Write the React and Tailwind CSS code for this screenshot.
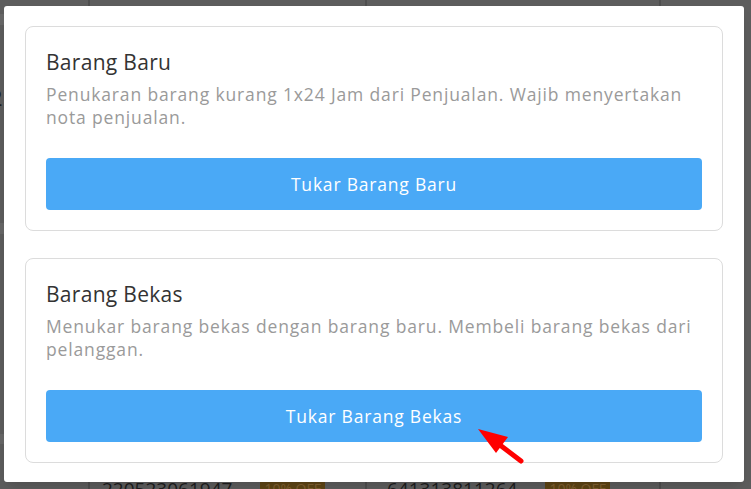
import React from "react";

const font = { fontFamily: '"Open Sans", "Noto Sans", sans-serif' };

function OptionCard({ title, desc, action }) {
  return (
    <div className="rounded-lg border-[1.5px] border-[#dcdcdc] px-5 pt-5 pb-5">
      <h3 className="text-[21px] leading-[30px] tracking-[0.3px] text-[#333]">{title}</h3>
      <p className="mt-[6px] text-[17.5px] leading-[23px] tracking-[0.85px] text-[#9a9a9a]">{desc}</p>
      <button className="mt-[29px] flex h-[52px] w-full items-center justify-center rounded-[4px] bg-[#4aa9f6] text-[17.5px] tracking-[0.8px] text-white">
        {action}
      </button>
    </div>
  );
}

export default function App() {
  return (
    <div className="relative h-[489px] w-[751px] overflow-hidden bg-[#5d5d5d]" style={font}>
      {/* dimmed page behind */}
      <div className="flex h-full">
        <div className="flex w-[90px] flex-col border-r-2 border-[#4e4e4e] text-[22px] text-[#1e1e1e]">
          <div className="mt-[14px] h-[11px] bg-[#676767]" />
          <span className="-ml-[10px] mt-[56px]">2</span>
          <span className="-ml-[10px] mt-[70px]">(</span>
          <div className="mt-[6px] h-[11px] bg-[#676767]" />
          <span className="-ml-[10px] mt-[60px]">c</span>
          <span className="-ml-[10px] mt-[64px]">(</span>
          <div className="mt-[10px] h-[10px] bg-[#676767]" />
        </div>
        <div className="flex w-[277px] flex-col justify-end border-r-2 border-[#4e4e4e]">
          <div className="-mb-[14px] flex items-center gap-[28px] pl-[12px]">
            <span className="text-[19px] text-[#1e1e1e]">220523061947</span>
            <span className="bg-[#5e4515] px-[4px] text-[14px] text-[#806030]">10% OFF</span>
          </div>
        </div>
        <div className="flex w-[294px] flex-col justify-end border-r-2 border-[#4e4e4e]">
          <div className="-mb-[14px] flex items-center gap-[28px] pl-[20px]">
            <span className="text-[19px] text-[#1e1e1e]">641313811264</span>
            <span className="bg-[#5e4515] px-[4px] text-[14px] text-[#806030]">10% OFF</span>
          </div>
        </div>
        <div className="flex-1" />
      </div>

      {/* modal */}
      <div className="absolute left-[4px] top-[6px] w-[740px] rounded-[3px] bg-white px-[21px] pt-[20px] pb-[19px] shadow-lg">
        <div className="flex flex-col gap-[27px]">
          <OptionCard
            title="Barang Baru"
            desc="Penukaran barang kurang 1x24 Jam dari Penjualan. Wajib menyertakan nota penjualan."
            action="Tukar Barang Baru"
          />
          <OptionCard
            title="Barang Bekas"
            desc="Menukar barang bekas dengan barang baru. Membeli barang bekas dari pelanggan."
            action="Tukar Barang Bekas"
          />
        </div>
      </div>

      {/* annotation arrow */}
      <svg className="absolute left-[470px] top-[420px]" width="60" height="50" viewBox="0 0 60 50">
        <line x1="51" y1="41" x2="22" y2="19" stroke="#ff0000" strokeWidth="5" strokeLinecap="round" />
        <polygon points="8,9 38,17 26,33" fill="#ff0000" />
      </svg>
    </div>
  );
}
